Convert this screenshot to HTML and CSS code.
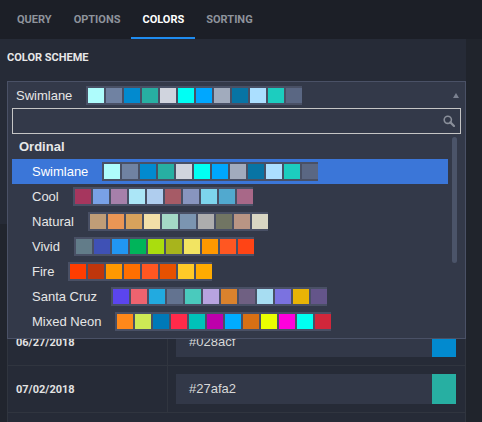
FILE: index.html
```html
<!DOCTYPE html>
<html>
<head>
<meta charset="utf-8">
<link rel="stylesheet" href="styles.css">
</head>
<body>
<div class="tabs">
  <div class="tab">Query</div>
  <div class="tab">Options</div>
  <div class="tab active">Colors</div>
  <div class="tab">Sorting</div>
</div>
<div class="body">
  <div class="main">
    <div class="section-label">Color Scheme</div>
    <div class="select">
      <div class="select-head">
        <span class="select-value">Swimlane</span>
        <span class="palette">
          <i style="background:#aefcfc"></i><i style="background:#7082a2"></i><i style="background:#028acf"></i><i style="background:#27afa2"></i><i style="background:#d0d4de"></i><i style="background:#00fff4"></i><i style="background:#00a7ff"></i><i style="background:#a1abbd"></i><i style="background:#0874a4"></i><i style="background:#abdfff"></i><i style="background:#1ccdbf"></i><i style="background:#5a6783"></i>
        </span>
        <span class="caret"></span>
      </div>
      <div class="menu">
        <div class="search">
          <svg width="12" height="12" viewBox="0 0 12 12"><circle cx="4.8" cy="4.8" r="3.6" fill="none" stroke="#8a8f9a" stroke-width="1.6"/><line x1="7.4" y1="7.4" x2="11" y2="11" stroke="#8a8f9a" stroke-width="2.2" stroke-linecap="round"/></svg>
        </div>
        <div class="list">
          <div class="options">
            <div class="group">Ordinal</div>
            <div class="option selected"><span class="opt-label">Swimlane</span><span class="palette">
              <i style="background:#aefcfc"></i><i style="background:#7082a2"></i><i style="background:#028acf"></i><i style="background:#27afa2"></i><i style="background:#d0d4de"></i><i style="background:#00fff4"></i><i style="background:#00a7ff"></i><i style="background:#a1abbd"></i><i style="background:#0874a4"></i><i style="background:#abdfff"></i><i style="background:#1ccdbf"></i><i style="background:#5a6783"></i>
            </span></div>
            <div class="option"><span class="opt-label">Cool</span><span class="palette">
              <i style="background:#a6365e"></i><i style="background:#79a1e6"></i><i style="background:#a680aa"></i><i style="background:#abe6f7"></i><i style="background:#afcdee"></i><i style="background:#a65b66"></i><i style="background:#8895bf"></i><i style="background:#7dd4ec"></i><i style="background:#51a9cf"></i><i style="background:#a86888"></i>
            </span></div>
            <div class="option"><span class="opt-label">Natural</span><span class="palette">
              <i style="background:#c09d77"></i><i style="background:#ea9655"></i><i style="background:#d8a25c"></i><i style="background:#f2dfa8"></i><i style="background:#a4d9c6"></i><i style="background:#7b95b1"></i><i style="background:#adadad"></i><i style="background:#717563"></i><i style="background:#b99584"></i><i style="background:#d8d6c3"></i>
            </span></div>
            <div class="option"><span class="opt-label">Vivid</span><span class="palette">
              <i style="background:#627c89"></i><i style="background:#3f51b5"></i><i style="background:#2196f3"></i><i style="background:#00b45a"></i><i style="background:#aadd0e"></i><i style="background:#a8b41c"></i><i style="background:#f2e462"></i><i style="background:#ff9800"></i><i style="background:#ff5722"></i><i style="background:#ff4415"></i>
            </span></div>
            <div class="option"><span class="opt-label">Fire</span><span class="palette">
              <i style="background:#ff3d00"></i><i style="background:#bf360c"></i><i style="background:#ff9800"></i><i style="background:#ff6f00"></i><i style="background:#ff5722"></i><i style="background:#e65100"></i><i style="background:#ffca28"></i><i style="background:#ffab00"></i>
            </span></div>
            <div class="option"><span class="opt-label">Santa Cruz</span><span class="palette">
              <i style="background:#5b45ee"></i><i style="background:#ee636f"></i><i style="background:#22aae0"></i><i style="background:#637390"></i><i style="background:#4acabd"></i><i style="background:#b7a3e0"></i><i style="background:#da822d"></i><i style="background:#6f6082"></i><i style="background:#a7ddf2"></i><i style="background:#7b72e0"></i><i style="background:#e8b406"></i><i style="background:#64558a"></i>
            </span></div>
            <div class="option"><span class="opt-label">Mixed Neon</span><span class="palette">
              <i style="background:#ff881a"></i><i style="background:#cde955"></i><i style="background:#0079b8"></i><i style="background:#ff2a4a"></i><i style="background:#00c2b9"></i><i style="background:#bd00ab"></i><i style="background:#00acff"></i><i style="background:#d87014"></i><i style="background:#e9ff00"></i><i style="background:#ff00dc"></i><i style="background:#00fff1"></i><i style="background:#d1273b"></i>
            </span></div>
          </div>
          <div class="scrolltrack"><div class="thumb"></div></div>
        </div>
      </div>
    </div>
    <div class="map-wrap">
      <div class="map">
        <div class="row"><div class="cell-date">06/13/2018</div><div class="cell-color"><div class="color-input">#aefcfc</div><div class="color-chip" style="background:#aefcfc"></div></div></div>
        <div class="row"><div class="cell-date">06/20/2018</div><div class="cell-color"><div class="color-input">#7082a2</div><div class="color-chip" style="background:#7082a2"></div></div></div>
        <div class="row"><div class="cell-date">06/27/2018</div><div class="cell-color"><div class="color-input">#028acf</div><div class="color-chip" style="background:#028acf"></div></div></div>
        <div class="row"><div class="cell-date">07/02/2018</div><div class="cell-color"><div class="color-input">#27afa2</div><div class="color-chip" style="background:#27afa2"></div></div></div>
        <div class="row row-empty"></div>
      </div>
    </div>
  </div>
  <div class="vscroll"></div>
</div>
</body>
</html>
```
FILE: styles.css
```css
* { box-sizing: border-box; }
html, body { margin: 0; height: 100%; }
body {
  background: #262b37;
  font-family: "Liberation Sans", Arial, sans-serif;
  color: #e6e6e6;
  overflow: hidden;
}
.tabs {
  display: flex;
  height: 39px;
  background: #1c1f27;
  padding-left: 6px;
}
.tab {
  padding: 0 11px;
  height: 39px;
  font: 700 11px Roboto, sans-serif;
  line-height: 39px;
  border-bottom: 2px solid transparent;
  text-transform: uppercase;
  color: #8e939c;
}
.tab.active { color: #ffffff; border-bottom-color: #1f8cf0; }
.body { display: flex; height: 383px; }
.main { width: 466px; padding: 12px 0 0 7px; background: #262b37; }
.vscroll { flex: 1; background: #20242c; }
.section-label {
  font: 700 11px Roboto, sans-serif;
  line-height: 14px;
  color: #e8e8e8;
  text-transform: uppercase;
}
.select {
  position: relative;
  margin-top: 16px;
  width: 459px;
  border: 1px solid #4a5166;
  background: #333949;
}
.select-head {
  display: flex;
  align-items: center;
  height: 26px;
  padding: 0 6px 0 8px;
}
.select-value, .opt-label { font-size: 13px; margin-right: 14px; }
.palette {
  display: flex;
  gap: 2px;
  padding: 2px 0 2px 2px;
  background: #495065;
}
.palette i { display: block; width: 16px; height: 15px; }
.caret {
  margin-left: auto;
  width: 0; height: 0;
  border-left: 3px solid transparent;
  border-right: 3px solid transparent;
  border-bottom: 5px solid #7b8190;
}
.menu {
  position: absolute;
  left: -1px; right: -1px; top: 100%;
  background: #333949;
  border: 1px solid #4a5166;
  border-top: 0;
  padding: 0 4px 4px;
  z-index: 2;
}
.search {
  height: 26px;
  border: 1px solid #c5c5c5;
  display: flex;
  align-items: center;
  justify-content: flex-end;
  padding-right: 5px;
}
.list { display: flex; height: 200px; overflow: hidden; }
.options { width: 436px; flex: none; }
.group {
  height: 25px;
  padding-left: 7px;
  font-weight: 700;
  font-size: 13px;
  line-height: 25px;
  color: #e8e8e8;
}
.option {
  height: 25px;
  display: flex;
  align-items: center;
  padding-left: 20px;
  color: #e6e6e6;
}
.option.selected { background: #3b76d8; color: #ffffff; }
.scrolltrack { margin-left: 4px; width: 5px; flex: none; }
.thumb { margin-top: 3px; height: 126px; border-radius: 3px; background: #4b5469; }
.map-wrap {
  margin: 115px 0 0 -7px;
  padding-left: 7px;
  background: #21252e;
}
.map {
  width: 459px;
  background: #262b37;
  border-left: 1px solid #30353f;
  border-right: 1px solid #30353f;
}
.row {
  display: grid;
  grid-template-columns: 159px 1fr;
  height: 47px;
  border-top: 1px solid #30353f;
}
.cell-date {
  padding-left: 8px;
  display: flex;
  align-items: center;
  font: 700 11px Roboto, sans-serif;
  color: #e2e2e2;
}
.cell-color {
  border-left: 1px solid #30353f;
  padding: 8px 9px 8px 8px;
  display: flex;
}
.color-input {
  flex: 1;
  height: 30px;
  background: #323848;
  padding-left: 13px;
  font-size: 13px;
  line-height: 30px;
  color: #d8d8d8;
}
.color-chip { width: 24px; height: 30px; }
```
